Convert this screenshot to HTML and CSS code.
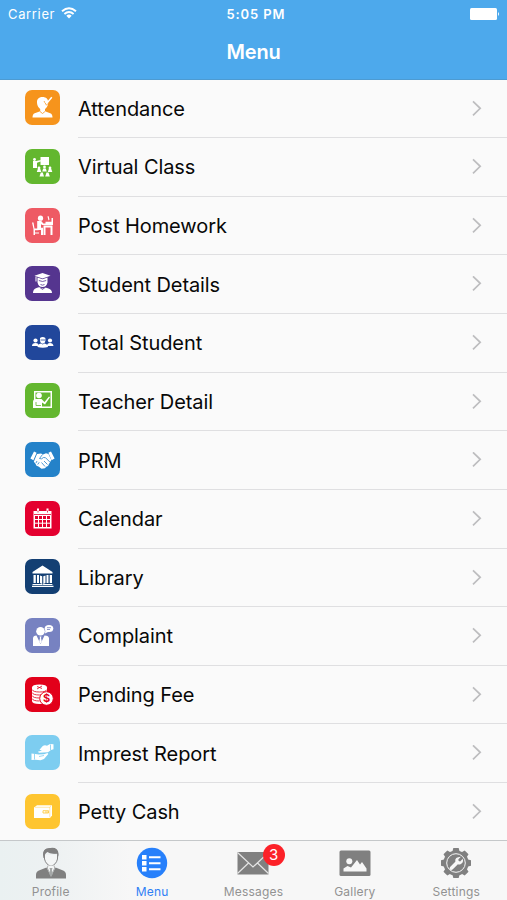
FILE: index.html
```html
<!DOCTYPE html>
<html lang="en">
<head>
    <meta charset="UTF-8">
    <meta name="viewport" content="width=device-width, initial-scale=1.0">
    <title>Menu</title>
    <link rel="stylesheet" href="styles.css">
</head>
<body>

<header class="header">
    <div class="status">
        <div class="carrier">
            <span>Carrier</span>
            <svg width="16" height="12" viewBox="0 0 16 12" fill="none" stroke="#fff" stroke-width="1.9">
                <path d="M1 4.2Q8 -1.8 15 4.2M3.4 7Q8 3 12.6 7"/>
                <path d="M5.3 8.7Q8 6.4 10.7 8.7L8 11.6Z" fill="#fff" stroke="none"/>
            </svg>
        </div>
        <div class="time">5:05 PM</div>
        <svg class="battery" width="30" height="12" viewBox="0 0 30 12" fill="#fff">
            <rect width="27" height="12" rx="1.5"/>
            <path d="M28 4Q30 6 28 8Z"/>
        </svg>
    </div>
    <h1>Menu</h1>
</header>

<ul class="menu">
    <li>
        <svg class="icon orange" viewBox="0 0 35 35">
            <path d="M17.5 7C13.5 7 11.700 9.500 12 13c.2 3 1.800 5 3.200 6v2.200l-5.500 2Q7.500 24 7.500 27.500h20q0-3.500-2.300-4.300L20 21.200V19c1.700-1.200 3-3.200 3.200-6 .2-4-2-6-5.700-6z"/>
            <path class="cut" d="M19 11l2.500 4.200L27 8M15 21.500l2.500 2 2.500-2"/>
            <path class="line bold" d="M20.300 11l1.500 2.300 5-6"/>
        </svg>
        <span class="label">Attendance</span>
        <svg class="chevron" viewBox="0 0 10 16"><path d="M1 1l7.200 7L1 15"/></svg>
    </li>
    <li>
        <svg class="icon green" viewBox="0 0 35 35">
            <path d="M15.500 8h8.500v8h-8.500zM8 12h3l5-1v1.200l-4 1.500V19H8z"/>
            <circle cx="9.500" cy="10.500" r="1.400"/>
            <circle cx="14" cy="19" r="1.400"/><circle cx="19.500" cy="18" r="1.400"/><circle cx="25" cy="19" r="1.400"/>
            <path d="M11.800 23l1-3h2.500l1 3zM17.200 22.500l1-3h2.600l1 3zM22.800 23l1-3h2.500l1 3zM14.500 27.500l1.300-4h2l1.200 4zM20.200 27.500l1.300-4h2l1.300 4z"/>
        </svg>
        <span class="label">Virtual Class</span>
        <svg class="chevron" viewBox="0 0 10 16"><path d="M1 1l7.200 7L1 15"/></svg>
    </li>
    <li>
        <svg class="icon coral" viewBox="0 0 35 35">
            <circle cx="15.500" cy="10.200" r="2.600"/>
            <path d="M12.200 13h4l2.200 2.500h3.600v1.500h-5l-1-1v3.800h2V27h-2v-5h-3.800zM7 14.500h1.500l1 6h4v1.700H10V27H8.500v-6zM18.500 17.500h9V27h-2v-7.500h-5V27h-2z"/>
            <path d="M20.500 13.800h6V10h1.500v7h-7.500zM23.500 12.500l-1-4 1-.5 1 3.500z"/>
            <path class="line" d="M9 25h5"/>
        </svg>
        <span class="label">Post Homework</span>
        <svg class="chevron" viewBox="0 0 10 16"><path d="M1 1l7.200 7L1 15"/></svg>
    </li>
    <li>
        <svg class="icon purple" viewBox="0 0 35 35">
            <path d="M9.500 9.700l8-2.700 8 2.700-8 2.700z"/>
            <path d="M12.500 11.500l5 1.700 5-1.700v5q-1 4.500-5 4.500t-5-4.500z"/>
            <path d="M8 27q0-4 3.500-5l3-1 3 1.500 3-1 3 1q3.500 1 3.500 4.500z"/>
            <path class="cut" d="M13.800 14.500l3.700 1 3.700-1M15.500 18.500q2 1.300 4 0M14.500 21.200l3 2.200 3-2.200"/>
            <path class="line" d="M11 10.500v5"/>
        </svg>
        <span class="label">Student Details</span>
        <svg class="chevron" viewBox="0 0 10 16"><path d="M1 1l7.200 7L1 15"/></svg>
    </li>
    <li>
        <svg class="icon navy" viewBox="0 0 35 35">
            <circle cx="10.500" cy="15.500" r="2.100"/><circle cx="25" cy="15.500" r="2.100"/>
            <path d="M7 21q0-3 3.500-3t3 3zM22 21q0-3 3-3t3.500 3zM15 13q2.700-2 5.400 0v3q-.5 2.800-2.700 2.800T15 16z"/>
            <path d="M12.500 22q0-3 3.500-3.500l1.700 1 1.700-1q3.600.5 3.600 3.500-5 1.500-10.500 0z"/>
            <path class="cut" d="M15.500 15h4.500"/>
        </svg>
        <span class="label">Total Student</span>
        <svg class="chevron" viewBox="0 0 10 16"><path d="M1 1l7.200 7L1 15"/></svg>
    </li>
    <li>
        <svg class="icon green" viewBox="0 0 35 35">
            <path fill-rule="evenodd" d="M9 8h18v17H9zM10.500 9.500v14h15v-14z"/>
            <circle cx="14" cy="12.500" r="2.800"/>
            <path d="M8 25v-6q0-3 3-3h5.500l3 3 4.500-5.500 1 .8-5 7.200-3-2v5.500z"/>
            <path class="cut" d="M11 19v3.500h5"/>
        </svg>
        <span class="label">Teacher Detail</span>
        <svg class="chevron" viewBox="0 0 10 16"><path d="M1 1l7.200 7L1 15"/></svg>
    </li>
    <li>
        <svg class="icon blue" viewBox="0 0 35 35">
            <path d="M9 9.500l2.600 1.300-3.200 7.400-3-1.600zM26 9.500l-2.600 1.300 3.200 7.400 3-1.600z"/>
            <path d="M12 12l4-.5 2 1 3-1.300 2.500.7 2.800 6-2.300 4-1 2-1.700.8-1.300 1.500-1.700.3-1.800.3-3-2.300-2-.8-1-2-1.700-2z"/>
            <path class="cut" d="M17.500 12.500l-3 4q2 1.200 4-1l2 .2 4.500 4.500M19 19l3.500 3.500M16.500 20.500l3.500 4M12 19l-1 2M14.200 20.300l-1.500 2.200"/>
        </svg>
        <span class="label">PRM</span>
        <svg class="chevron" viewBox="0 0 10 16"><path d="M1 1l7.200 7L1 15"/></svg>
    </li>
    <li>
        <svg class="icon red" viewBox="0 0 35 35">
            <path fill-rule="evenodd" d="M8.500 10h18v17.500h-18zM10 15v11h15V15z"/>
            <path d="M12 7.500h2V10h-2zM21.500 7.500h2V10h-2z"/>
            <path class="line" d="M10 18.500h15M10 22.200h15M13.500 15v11M17.500 15v11M21.500 15v11"/>
            <path class="cut" d="M9 13.500h17M13 9.500v2M22.500 9.500v2"/>
        </svg>
        <span class="label">Calendar</span>
        <svg class="chevron" viewBox="0 0 10 16"><path d="M1 1l7.200 7L1 15"/></svg>
    </li>
    <li>
        <svg class="icon darkblue" viewBox="0 0 35 35">
            <path d="M17.500 6.500L27.500 13v1.500h-20V13zM8.500 16h2.300v8H8.500zM12 16h2v8h-2zM21.500 16h2v8h-2zM24.700 16H27v8h-2.300zM15 16.500l2.200.8V25l-2.200-1zM20.500 16.500l-2.200.8V25l2.200-1zM7.500 25h9.500l.7.700.7-.7h9v1H7.500zM7 26.700h21.500V28H7z"/>
        </svg>
        <span class="label">Library</span>
        <svg class="chevron" viewBox="0 0 10 16"><path d="M1 1l7.200 7L1 15"/></svg>
    </li>
    <li>
        <svg class="icon lilac" viewBox="0 0 35 35">
            <circle cx="15.500" cy="13.200" r="4.300"/>
            <path d="M8 28v-7.500q0-3 3.500-3l4 8.500 4-8.500q4.500 0 4.500 3V28z"/>
            <path d="M14.500 18.500h2l-.5 1.500.8 3.500-1.300 2-1.300-2 .8-3.500z"/>
            <ellipse cx="24" cy="10.500" rx="4.300" ry="3.500"/>
            <path d="M20.500 12l-.5 3.500 4-2z"/>
            <path class="cut" d="M22 9.700h4M22 11.500h3"/>
        </svg>
        <span class="label">Complaint</span>
        <svg class="chevron" viewBox="0 0 10 16"><path d="M1 1l7.200 7L1 15"/></svg>
    </li>
    <li>
        <svg class="icon crimson" viewBox="0 0 35 35">
            <path d="M7 10.500q0-3 7.500-3t7.500 3V23q0 4-7.500 4T7 24z"/>
            <path class="cut" d="M7 12.500q1 2.500 7.500 2.500t7.500-2.500M7 15.500q1 2.500 7.500 2.500t7.500-2.500M7 18.500q1 2.500 7.500 2.500M7 21.500q1 2.500 7.500 2.500M12 9.500l5 2M17 9l-5 3"/>
            <circle class="coin" cx="21.500" cy="21.500" r="6.800"/>
            <text x="21.500" y="25.400">$</text>
        </svg>
        <span class="label">Pending Fee</span>
        <svg class="chevron" viewBox="0 0 10 16"><path d="M1 1l7.200 7L1 15"/></svg>
    </li>
    <li>
        <svg class="icon sky" viewBox="0 0 35 35">
            <path d="M25 9l3.500.3v5L26 15l-3 2.300-9 .5-1.200-1 4.200-1.300-2.500-.8 3-3.500q2-1.500 4.500-.5z"/>
            <path d="M6.500 18.500l4 .5 3 .5 5.500-.3 3.500-1.200.8 1-4.300 5-3.500 1.300-5-.5-4 .2z"/>
            <path class="cut" d="M25.500 9.500v5.700M9.500 18.500v6M14 21.500l5-1"/>
        </svg>
        <span class="label">Imprest Report</span>
        <svg class="chevron" viewBox="0 0 10 16"><path d="M1 1l7.200 7L1 15"/></svg>
    </li>
    <li>
        <svg class="icon yellow" viewBox="0 0 35 35">
            <path d="M9 13.500l3-2.300h15v10.300l-2 2.500H9z"/>
            <path class="cut thin" d="M10 13.300h14.800v10M26 11.500l-1.200 2"/>
            <path class="cut" d="M18 16.700h5.500v2.300H18zM20 18h3"/>
        </svg>
        <span class="label">Petty Cash</span>
        <svg class="chevron" viewBox="0 0 10 16"><path d="M1 1l7.200 7L1 15"/></svg>
    </li>
</ul>

<nav class="tabs">
    <div class="tab">
        <svg width="30" height="32" viewBox="0 0 30 32">
            <path d="M7.500 11Q5.500 1.500 13 1.200q9-1.700 9.500 5.300L22 11l-1-4.500q-7 .8-9.500-1.500Q8.500 6 8.500 11z"/>
            <path d="M8.500 8v4q1.500 6 6.500 7 5-1 6.500-7V8" fill="#f4f6f6" stroke="#858585" stroke-width="1"/>
            <path d="M7.300 9Q6.500 1.500 13 1.200q9-1.200 9.700 7.800l-2-2.500q-6 .3-9.200-2Q9 6 7.300 9z"/>
            <path d="M0 31.500v-3.700q0-3.500 3.500-4.500l7-2.800 4.500 9 4.500-9 7 2.800q3.500 1 3.500 4.500v3.700z"/>
            <path d="M12 18.500l-.7 2.500 3.700 8 3.700-8-.7-2.500" fill="#f4f6f6" stroke="#858585" stroke-width=".6"/>
            <path d="M13.500 21h3l-.6 2 .8 4L15 30l-1.700-3 .8-4z" fill="#a5a8a8"/>
        </svg>
        <span>Profile</span>
    </div>
    <div class="tab active">
        <svg width="32" height="32" viewBox="0 0 32 32">
            <circle cx="16" cy="16" r="15.200"/>
            <path d="M6 8h4.500v4.500H6zM6 14h4.500v4.500H6zM6 20h4.500v4.500H6zM13 9.300h11.500v1.900H13zM13 15.300h11.500v1.900H13zM13 21.300h11.500v1.900H13z" fill="#fff"/>
        </svg>
        <span>Menu</span>
    </div>
    <div class="tab">
        <svg width="32" height="32" viewBox="0 0 32 32">
            <path d="M.5 5h31v22.500H.5z"/>
            <path d="M.5 5.500L16 20 31.500 5.500M.5 26.500l11-10.500M31.500 26.500l-11-10.500" fill="none" stroke="#e4e4e4" stroke-width="1.200"/>
        </svg>
        <b class="badge">3</b>
        <span>Messages</span>
    </div>
    <div class="tab">
        <svg width="32" height="32" viewBox="0 0 32 32">
            <rect x=".5" y="3.500" width="31" height="25.500" rx="1.500"/>
            <path d="M4.500 24.500v-3l4-2.500 3.500 1.500 6-7.500 3 4.500 2-2.500 4.500 6.500v3z" fill="#f7f7f7"/>
            <circle cx="10.300" cy="14.300" r="3" fill="#f7f7f7"/>
        </svg>
        <span>Gallery</span>
    </div>
    <div class="tab">
        <svg width="32" height="32" viewBox="0 0 32 32">
            <path d="M12.300 5l1-4h5.400l1 4v22l-1 4h-5.400l-1-4z"/>
            <path d="M12.300 5l1-4h5.400l1 4v22l-1 4h-5.400l-1-4z" transform="rotate(45 16 16)"/>
            <path d="M12.300 5l1-4h5.400l1 4v22l-1 4h-5.400l-1-4z" transform="rotate(90 16 16)"/>
            <path d="M12.300 5l1-4h5.400l1 4v22l-1 4h-5.400l-1-4z" transform="rotate(135 16 16)"/>
            <circle cx="16" cy="16" r="12.600"/>
            <circle cx="16" cy="16" r="9.300" fill="none" stroke="#f7f7f7" stroke-width="1"/>
            <path d="M20.800 9.800l-2.500 2.700.4 1.500 1.500.4 2.600-2.600q1 4.200-2.300 5.400-1.500.5-2.600.1l-5.300 5.300q-1.500 1-2.600-.1-1-1.200.1-2.500l5.200-5.300q-.8-4.700 5.500-4.900z" fill="#f7f7f7"/>
        </svg>
        <span>Settings</span>
    </div>
</nav>

</body>
</html>
```

FILE: styles.css
```css
* {
    box-sizing: border-box;
}
body {
    margin: 0;
    height: 900px;
    overflow: hidden;
    display: flex;
    flex-direction: column;
    background: #fafafa;
    color: #080808;
    font-family: Inter, "Liberation Sans", sans-serif;
}
.header {
    height: 80px;
    flex: none;
    background: #4da9ec;
    border-bottom: 1px solid #4d9bd2;
    color: #fff;
}
.status {
    display: grid;
    grid-template-columns: 1fr auto 1fr;
    align-items: center;
    height: 27px;
    padding: 0 7px 0 8px;
    font-size: 13px;
}
.carrier {
    display: flex;
    align-items: center;
    gap: 6px;
    letter-spacing: 0.65px;
}
.carrier svg {
    margin-bottom: 2px;
}
.time {
    margin-left: 4px;
    font-weight: 600;
    letter-spacing: 0.9px;
}
.battery {
    justify-self: end;
}
h1 {
    margin: 12px 0 0;
    text-align: center;
    font-size: 20px;
    line-height: 26px;
    font-weight: 600;
    letter-spacing: -0.2px;
}
.menu {
    margin: 0;
    padding: 0;
    list-style: none;
    height: 760px;
    flex: none;
    overflow: hidden;
}
.menu li {
    display: flex;
    align-items: center;
    height: 58.64px;
    padding-left: 25px;
}
.menu li:first-child {
    margin-top: -0.5px;
}
.icon {
    width: 35px;
    height: 35px;
    margin-top: -2px;
    flex: none;
    border-radius: 7px;
    background: var(--bg);
    fill: #fff;
}
.icon .line {
    fill: none;
    stroke: #fff;
    stroke-width: 1;
}
.icon .bold {
    stroke-width: 1.5;
}
.icon .cut {
    fill: none;
    stroke: var(--bg);
    stroke-width: 0.8;
}
.icon .thin {
    stroke-width: 0.4;
}
.icon .coin {
    stroke: var(--bg);
    stroke-width: 1;
}
.icon text {
    fill: var(--bg);
    font-size: 11px;
    font-weight: 700;
    text-anchor: middle;
}
.orange { --bg: #f6941c; }
.green { --bg: #63b72f; }
.coral { --bg: #ee5a64; }
.purple { --bg: #55358f; }
.navy { --bg: #21479b; }
.blue { --bg: #2482c9; }
.red { --bg: #e4002f; }
.darkblue { --bg: #133f73; }
.lilac { --bg: #7782c1; }
.crimson { --bg: #e2001a; }
.sky { --bg: #7dcdf0; }
.yellow { --bg: #fec530; }
.label {
    flex: 1;
    align-self: stretch;
    display: flex;
    align-items: center;
    margin-left: 18px;
    padding-top: 1px;
    font-size: 20px;
    letter-spacing: -0.08px;
    border-bottom: 1px solid #dfdfe1;
}
.chevron {
    box-sizing: content-box;
    width: 10px;
    height: 16px;
    padding: 20.320px 25px 21.320px 0;
    border-bottom: 1px solid #dfdfe1;
    fill: none;
    stroke: #bdbdbf;
    stroke-width: 1.7;
}
.tabs {
    flex: 1;
    display: grid;
    grid-template-columns: repeat(5, 1fr);
    border-top: 1px solid #c5c8ca;
    background: linear-gradient(90deg, #eaf1f1 0, #edf1f2 50px, #f7f7f7 130px);
}
.tab {
    position: relative;
    display: flex;
    flex-direction: column;
    align-items: center;
    padding-top: 6px;
    font-size: 12px;
    line-height: 14px;
    letter-spacing: 0.2px;
    color: #929292;
    fill: #808080;
}
.tab span {
    margin-top: 6px;
}
.active {
    color: #2f80f5;
    fill: #2780fb;
}
.badge {
    position: absolute;
    top: 3px;
    left: 60px;
    width: 22px;
    height: 22px;
    border-radius: 50%;
    background: #fc2128;
    color: #fff;
    font-size: 15px;
    font-weight: 400;
    line-height: 22px;
    text-align: center;
}
```
